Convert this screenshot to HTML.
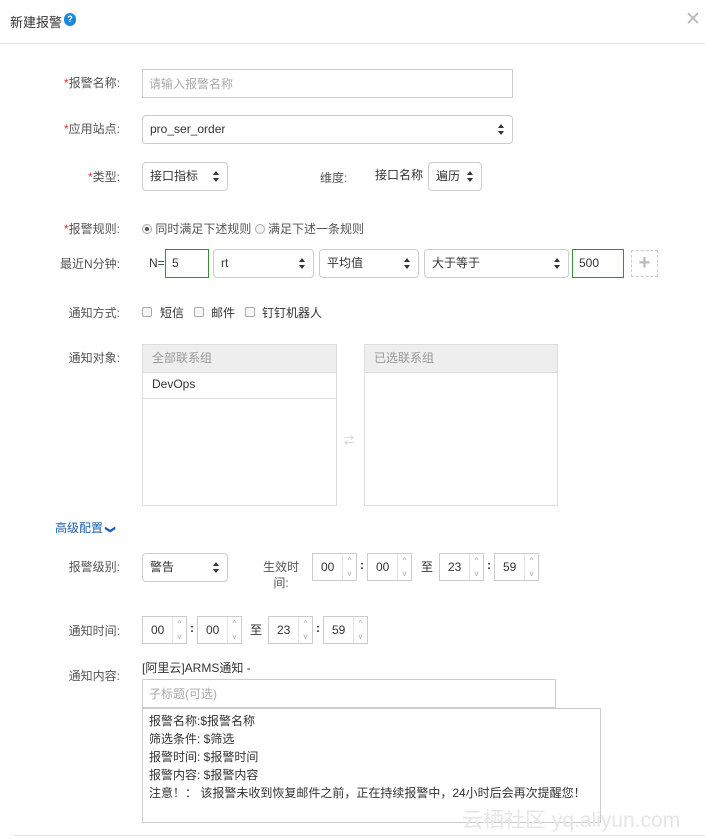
<!DOCTYPE html>
<html><head><meta charset="utf-8"><style>
*{box-sizing:border-box;margin:0;padding:0}
body{width:705px;height:839px;background:#fff;position:relative;overflow:hidden;font-family:"Liberation Sans","Noto Sans CJK SC",sans-serif;font-size:12px;color:#333}
.a{position:absolute;white-space:nowrap}
.lbl{position:absolute;width:120px;left:0;text-align:right;color:#555;font-size:12px;white-space:nowrap}
.lbl b{color:#d9332c;font-weight:normal}
.box{position:absolute;border:1px solid #ccc;background:#fff}
.sel{position:absolute;border:1px solid #ccc;border-radius:4px;background:#fff;padding-left:7px;font-size:12px;color:#333}
.sel:after{content:"";position:absolute;right:8px;top:50%;margin-top:-6px;width:0;height:0;border-left:3px solid transparent;border-right:3px solid transparent;border-bottom:4px solid #333}
.sel:before{content:"";position:absolute;right:8px;top:50%;margin-top:1px;width:0;height:0;border-left:3px solid transparent;border-right:3px solid transparent;border-top:4px solid #333}
.sp{position:absolute;border:1px solid #ccc;background:#fff;height:28px;padding-left:8px;line-height:26px;font-size:12px}
.sp i{position:absolute;right:0;top:0;width:14px;height:26px;border-left:1px solid #e3e3e3;font-style:normal;color:#aaa;font-size:8px;text-align:center;line-height:13px}
.rad{display:inline-block;width:10px;height:10px;border:1px solid #aaa;border-radius:50%;vertical-align:-1px;background:#f3f3f3;position:relative}
.chk{position:absolute;width:10px;height:10px;border:1px solid #aaa;border-radius:2px;background:#f7f7f7}
</style></head><body>
<div class="a" style="left:10px;top:12px;font-size:13px;color:#333">新建报警</div>
<div class="a" style="left:64px;top:13px;width:12px;height:13px;border-radius:6px;background:#1b8ad6;color:#fff;font-size:9px;font-weight:bold;text-align:center;line-height:13px">?</div>
<div class="a" style="left:685px;top:8px;font-size:19px;color:#bbb">✕</div>
<div class="a" style="left:0;top:43px;width:705px;height:1px;background:#e3e3e3"></div>

<div class="lbl" style="top:74px"><b>*</b>报警名称:</div>
<div class="box" style="left:142px;top:69px;width:371px;height:29px;padding:5px 6px;color:#aaa">请输入报警名称</div>

<div class="lbl" style="top:120px"><b>*</b>应用站点:</div>
<div class="sel" style="left:142px;top:115px;width:371px;height:29px;line-height:26px">pro_ser_order</div>

<div class="lbl" style="top:168px"><b>*</b>类型:</div>
<div class="sel" style="left:142px;top:162px;width:86px;height:29px;line-height:26px">接口指标</div>
<div class="a" style="left:320px;top:169px;color:#555">维度:</div>
<div class="a" style="left:375px;top:166px;color:#333">接口名称</div>
<div class="sel" style="left:428px;top:162px;width:54px;height:29px;line-height:26px">遍历</div>

<div class="lbl" style="top:220px"><b>*</b>报警规则:</div>
<div class="a" style="left:142px;top:220px;color:#555"><span class="rad"><span style="position:absolute;left:2px;top:2px;width:4px;height:4px;border-radius:50%;background:#555"></span></span> 同时满足下述规则 <span class="rad"></span> 满足下述一条规则</div>

<div class="lbl" style="top:255px">最近N分钟:</div>
<div class="a" style="left:149px;top:256px">N=</div>
<div class="box" style="left:165px;top:249px;width:44px;height:29px;border-color:#3a8a3a;padding:6px 6px">5</div>
<div class="sel" style="left:213px;top:249px;width:101px;height:29px;line-height:26px">rt</div>
<div class="sel" style="left:319px;top:249px;width:100px;height:29px;line-height:26px">平均值</div>
<div class="sel" style="left:424px;top:249px;width:145px;height:29px;line-height:26px">大于等于</div>
<div class="box" style="left:572px;top:249px;width:52px;height:29px;border-color:#3a8a3a;padding:6px 6px">500</div>
<div class="a" style="left:631px;top:250px;width:27px;height:27px;border:1px dashed #ccc;color:#bbb;font-size:20px;text-align:center;line-height:25px;font-weight:bold">+</div>

<div class="lbl" style="top:304px">通知方式:</div>
<div class="chk" style="left:142px;top:307px"></div><div class="a" style="left:160px;top:304px">短信</div>
<div class="chk" style="left:194px;top:307px"></div><div class="a" style="left:211px;top:304px">邮件</div>
<div class="chk" style="left:245px;top:307px"></div><div class="a" style="left:262px;top:304px">钉钉机器人</div>

<div class="lbl" style="top:349px">通知对象:</div>
<div class="box" style="left:142px;top:344px;width:195px;height:162px;border-color:#ddd">
<div style="height:28px;background:#eee;border-bottom:1px solid #ddd;color:#999;padding:4px 9px">全部联系组</div>
<div style="height:26px;border-bottom:1px solid #ddd;padding:4px 9px;color:#333">DevOps</div></div>
<div class="a" style="left:344px;top:432px;color:#ccc;font-size:10px">⇄</div>
<div class="box" style="left:364px;top:344px;width:194px;height:162px;border-color:#ddd">
<div style="height:28px;background:#eee;border-bottom:1px solid #ddd;color:#999;padding:4px 9px">已选联系组</div></div>

<div class="a" style="left:55px;top:519px;color:#1a5fa8">高级配置<span style="display:inline-block;transform:rotate(90deg);font-size:10px;font-weight:bold;margin-left:3px">❯</span></div>

<div class="lbl" style="top:558px">报警级别:</div>
<div class="sel" style="left:142px;top:553px;width:86px;height:29px;line-height:26px">警告</div>
<div class="a" style="left:263px;top:559px;color:#555;line-height:16px;text-align:center;width:36px;white-space:normal">生效时间:</div>
<div class="sp" style="left:312px;top:553px;width:45px">00<i>^<br>v</i></div>
<div class="a" style="left:360px;top:558px;font-weight:bold">:</div>
<div class="sp" style="left:367px;top:553px;width:45px">00<i>^<br>v</i></div>
<div class="a" style="left:421px;top:558px">至</div>
<div class="sp" style="left:439px;top:553px;width:45px">23<i>^<br>v</i></div>
<div class="a" style="left:487px;top:558px;font-weight:bold">:</div>
<div class="sp" style="left:494px;top:553px;width:45px">59<i>^<br>v</i></div>

<div class="lbl" style="top:622px">通知时间:</div>
<div class="sp" style="left:142px;top:616px;width:45px">00<i>^<br>v</i></div>
<div class="a" style="left:190px;top:621px;font-weight:bold">:</div>
<div class="sp" style="left:197px;top:616px;width:45px">00<i>^<br>v</i></div>
<div class="a" style="left:250px;top:621px">至</div>
<div class="sp" style="left:268px;top:616px;width:45px">23<i>^<br>v</i></div>
<div class="a" style="left:316px;top:621px;font-weight:bold">:</div>
<div class="sp" style="left:323px;top:616px;width:45px">59<i>^<br>v</i></div>

<div class="lbl" style="top:667px">通知内容:</div>
<div class="a" style="left:142px;top:659px">[阿里云]ARMS通知 -</div>
<div class="box" style="left:142px;top:679px;width:414px;height:29px;padding:5px 6px;color:#aaa">子标题(可选)</div>
<div class="box" style="left:142px;top:708px;width:459px;height:115px;padding:3px 6px;line-height:18px;color:#333">报警名称:$报警名称<br>筛选条件: $筛选<br>报警时间: $报警时间<br>报警内容: $报警内容<br>注意！： 该报警未收到恢复邮件之前，正在持续报警中，24小时后会再次提醒您！</div>
<div class="a" style="left:462px;top:804px;font-size:21px;color:#e6e6e6">云栖社区 yq.aliyun.com</div>
<div class="a" style="left:14px;top:835px;width:691px;height:1px;background:#e3e3e3"></div>
</body></html>
